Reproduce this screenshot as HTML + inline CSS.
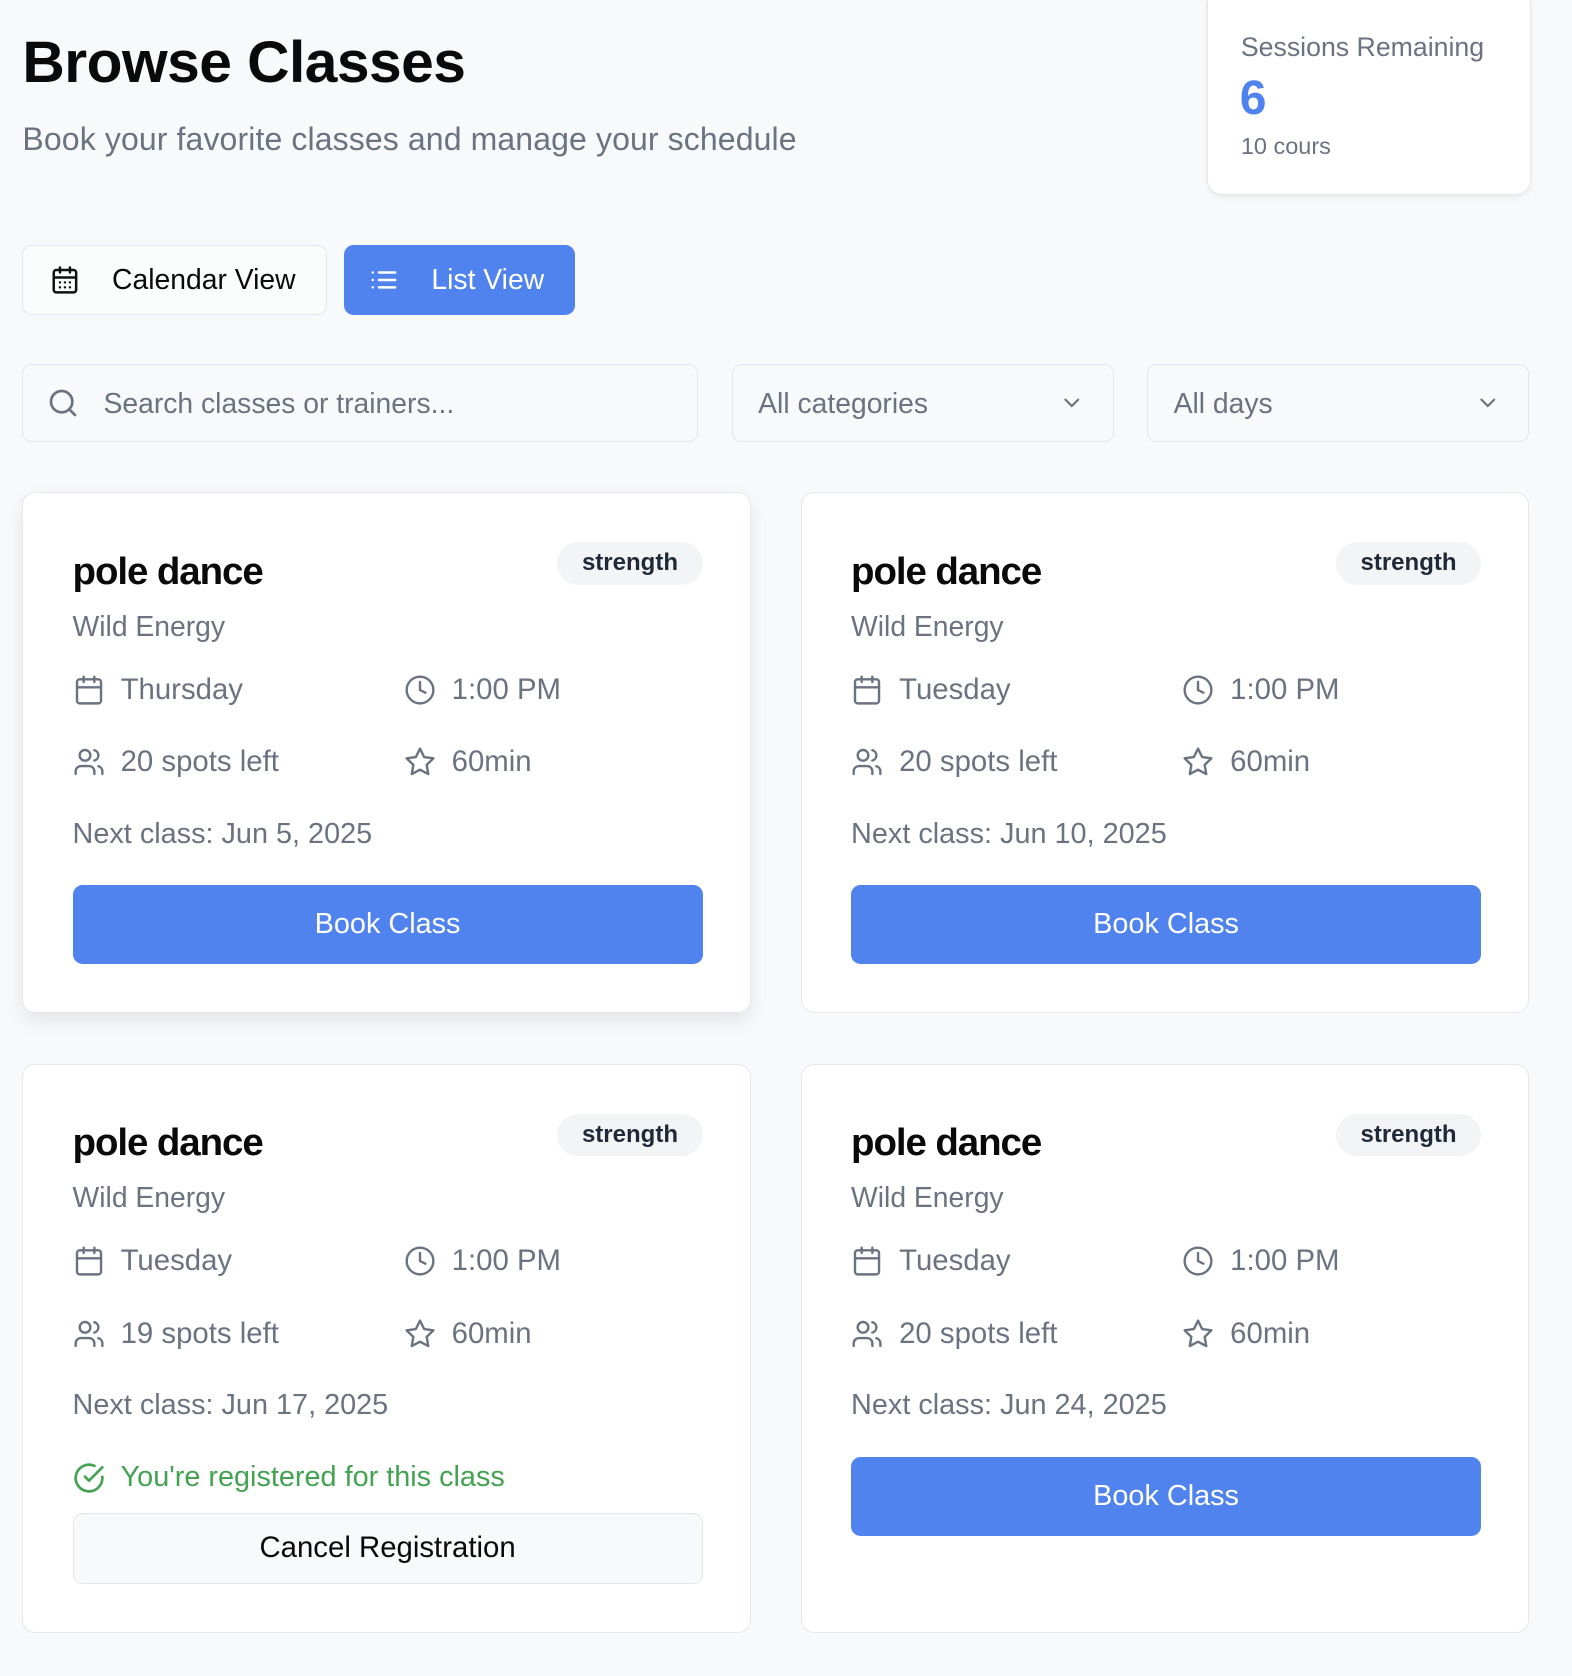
<!DOCTYPE html>
<html><head><meta charset="utf-8"><style>
html,body{margin:0;padding:0;background:#f8f9fa;}
body{width:1472px;height:1569px;zoom:1.06793;position:relative;overflow:hidden;font-family:"Liberation Sans",sans-serif;}
.a{position:absolute;}
h1{position:absolute;left:21px;top:24px;margin:0;font-size:55px;font-weight:700;color:#0a0a0a;letter-spacing:-0.5px;line-height:70px;}
.sub{left:21px;top:111px;font-size:30px;color:#6b7280;line-height:38px;letter-spacing:0.1px;}
.sess{left:1130px;top:-12px;width:302px;height:193px;background:#fff;border:1px solid #e5e7eb;border-radius:14px;box-shadow:0 2px 4px rgba(0,0,0,.06);}
.btn{position:absolute;top:229px;height:66px;border-radius:9px;box-sizing:border-box;display:flex;align-items:center;font-size:26.5px;}
.inp{position:absolute;top:341px;height:73px;border:1px solid #e2e5e9;border-radius:9px;box-sizing:border-box;background:#f8f9fa;display:flex;align-items:center;font-size:26.5px;color:#6b7280;}
.card{position:absolute;width:682px;background:#fff;border:1px solid #e5e7eb;border-radius:12px;box-sizing:border-box;}
.card .t{position:absolute;left:46px;top:50px;font-size:36px;font-weight:700;color:#0a0a0a;letter-spacing:-1px;line-height:46px;}
.card .bd{position:absolute;left:500px;top:46px;width:136px;height:40px;border-radius:20px;background:#f3f4f6;font-size:22.5px;font-weight:700;color:#1f2937;text-align:center;line-height:40px;}
.card .w{position:absolute;left:46px;top:107px;font-size:26.5px;color:#6b7280;line-height:34px;}
.row{position:absolute;display:flex;align-items:center;font-size:27.5px;color:#6b7280;height:34px;}
.row svg{width:30px;height:30px;margin-right:15px;}
.nx{position:absolute;left:46px;top:302px;font-size:27px;color:#6b7280;line-height:34px;}
.bk{position:absolute;left:46px;top:367px;width:590px;height:74px;background:#5083ee;border-radius:9px;color:#fff;font-size:27px;text-align:center;line-height:74px;}
</style></head><body>
<h1>Browse Classes</h1>
<div class="a sub">Book your favorite classes and manage your schedule</div>
<div class="a sess">
 <div class="a" style="left:31px;top:41px;font-size:25px;color:#6b7280;">Sessions Remaining</div>
 <div class="a" style="left:30px;top:78px;font-size:45px;font-weight:700;color:#4f83ee;">6</div>
 <div class="a" style="left:31px;top:136px;font-size:22px;color:#6b7280;">10 cours</div>
</div>
<div class="btn" style="left:21px;width:285px;background:#fbfcfc;border:1px solid #e2e5e9;color:#0a0a0a;">
 <svg style="margin-left:25px;width:28px;height:28px" viewBox="0 0 24 24" fill="none" stroke="#111" stroke-width="2" stroke-linecap="round"><rect x="3" y="4" width="18" height="18" rx="2"/><path d="M8 2v4M16 2v4M3 10h18"/><path d="M8 14h.01M12 14h.01M16 14h.01M8 18h.01M12 18h.01M16 18h.01"/></svg>
 <span style="margin-left:30px">Calendar View</span></div>
<div class="btn" style="left:322px;width:216px;background:#5083ee;color:#fff;">
 <svg style="margin-left:24px;width:28px;height:28px" viewBox="0 0 24 24" fill="none" stroke="#fff" stroke-width="2" stroke-linecap="round"><path d="M8 6h13M8 12h13M8 18h13M3 6h.01M3 12h.01M3 18h.01"/></svg>
 <span style="margin-left:30px">List View</span></div>
<div class="inp" style="left:21px;width:633px;">
 <svg style="margin-left:22px;width:30px;height:30px" viewBox="0 0 24 24" fill="none" stroke="#6b7280" stroke-width="2" stroke-linecap="round"><circle cx="11" cy="11" r="8"/><path d="M21 21l-4.3-4.3"/></svg>
 <span style="margin-left:23px">Search classes or trainers...</span></div>
<div class="inp" style="left:685px;width:358px;justify-content:space-between;">
 <span style="margin-left:24px">All categories</span>
 <svg style="margin-right:26px;width:24px;height:24px" viewBox="0 0 24 24" fill="none" stroke="#6b7280" stroke-width="2" stroke-linecap="round"><path d="M6 9l6 6 6-6"/></svg></div>
<div class="inp" style="left:1074px;width:358px;justify-content:space-between;">
 <span style="margin-left:24px">All days</span>
 <svg style="margin-right:26px;width:24px;height:24px" viewBox="0 0 24 24" fill="none" stroke="#6b7280" stroke-width="2" stroke-linecap="round"><path d="M6 9l6 6 6-6"/></svg></div>

<svg width="0" height="0" style="position:absolute">
<symbol id="cal" viewBox="0 0 24 24"><g fill="none" stroke="#6b7280" stroke-width="1.8" stroke-linecap="round"><rect x="3" y="4" width="18" height="18" rx="2"/><path d="M8 2v4M16 2v4M3 10h18"/></g></symbol>
<symbol id="clk" viewBox="0 0 24 24"><g fill="none" stroke="#6b7280" stroke-width="1.8" stroke-linecap="round"><circle cx="12" cy="12" r="10"/><path d="M12 6v6l4 2"/></g></symbol>
<symbol id="usr" viewBox="0 0 24 24"><g fill="none" stroke="#6b7280" stroke-width="1.8" stroke-linecap="round"><path d="M16 21v-2a4 4 0 0 0-4-4H6a4 4 0 0 0-4 4v2"/><circle cx="9" cy="7" r="4"/><path d="M22 21v-2a4 4 0 0 0-3-3.87M16 3.13a4 4 0 0 1 0 7.75"/></g></symbol>
<symbol id="str" viewBox="0 0 24 24"><path fill="none" stroke="#6b7280" stroke-width="1.8" stroke-linejoin="round" d="M12 2l3.09 6.26L22 9.27l-5 4.87 1.18 6.88L12 17.77l-6.18 3.25L7 14.14 2 9.27l6.91-1.01z"/></symbol>
</svg>

<div class="card" style="left:21px;top:461px;height:488px;box-shadow:0 8px 18px rgba(0,0,0,.08);">
 <div class="t">pole dance</div><div class="bd">strength</div><div class="w">Wild Energy</div>
 <div class="row" style="left:46px;top:167px"><svg><use href="#cal"/></svg>Thursday</div>
 <div class="row" style="left:356px;top:167px"><svg><use href="#clk"/></svg>1:00 PM</div>
 <div class="row" style="left:46px;top:235px"><svg><use href="#usr"/></svg>20 spots left</div>
 <div class="row" style="left:356px;top:235px"><svg><use href="#str"/></svg>60min</div>
 <div class="nx">Next class: Jun 5, 2025</div><div class="bk">Book Class</div>
</div>
<div class="card" style="left:750px;top:461px;height:488px;">
 <div class="t">pole dance</div><div class="bd">strength</div><div class="w">Wild Energy</div>
 <div class="row" style="left:46px;top:167px"><svg><use href="#cal"/></svg>Tuesday</div>
 <div class="row" style="left:356px;top:167px"><svg><use href="#clk"/></svg>1:00 PM</div>
 <div class="row" style="left:46px;top:235px"><svg><use href="#usr"/></svg>20 spots left</div>
 <div class="row" style="left:356px;top:235px"><svg><use href="#str"/></svg>60min</div>
 <div class="nx">Next class: Jun 10, 2025</div><div class="bk">Book Class</div>
</div>
<div class="card" style="left:21px;top:996px;height:533px;">
 <div class="t">pole dance</div><div class="bd">strength</div><div class="w">Wild Energy</div>
 <div class="row" style="left:46px;top:167px"><svg><use href="#cal"/></svg>Tuesday</div>
 <div class="row" style="left:356px;top:167px"><svg><use href="#clk"/></svg>1:00 PM</div>
 <div class="row" style="left:46px;top:235px"><svg><use href="#usr"/></svg>19 spots left</div>
 <div class="row" style="left:356px;top:235px"><svg><use href="#str"/></svg>60min</div>
 <div class="nx">Next class: Jun 17, 2025</div>
 <div class="row" style="left:46px;top:370px;color:#43a352;font-size:27px"><svg viewBox="0 0 24 24" fill="none" stroke="#43a352" stroke-width="2" stroke-linecap="round" stroke-linejoin="round"><path d="M22 11.08V12a10 10 0 1 1-5.93-9.14"/><path d="M9 11l3 3L22 4"/></svg>You're registered for this class</div>
 <div class="a" style="left:46px;top:420px;width:590px;height:66px;box-sizing:border-box;border:1px solid #e2e5e9;border-radius:9px;background:#f8f9fa;text-align:center;line-height:64px;font-size:27.5px;color:#0a0a0a;">Cancel Registration</div>
</div>
<div class="card" style="left:750px;top:996px;height:533px;">
 <div class="t">pole dance</div><div class="bd">strength</div><div class="w">Wild Energy</div>
 <div class="row" style="left:46px;top:167px"><svg><use href="#cal"/></svg>Tuesday</div>
 <div class="row" style="left:356px;top:167px"><svg><use href="#clk"/></svg>1:00 PM</div>
 <div class="row" style="left:46px;top:235px"><svg><use href="#usr"/></svg>20 spots left</div>
 <div class="row" style="left:356px;top:235px"><svg><use href="#str"/></svg>60min</div>
 <div class="nx">Next class: Jun 24, 2025</div><div class="bk">Book Class</div>
</div>
</body></html>
